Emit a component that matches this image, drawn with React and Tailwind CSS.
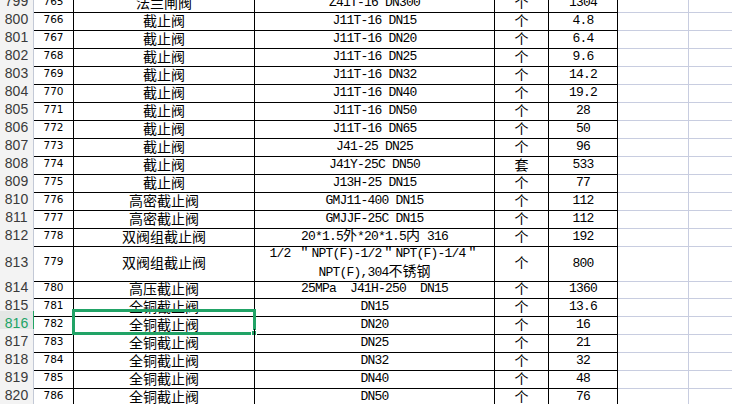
import React from "react";

const rows = [
  { n: 799, id: 765, name: "法兰闸阀", spec: "Z41T-16 DN300", unit: "个", price: "1304" },
  { n: 800, id: 766, name: "截止阀", spec: "J11T-16 DN15", unit: "个", price: "4.8" },
  { n: 801, id: 767, name: "截止阀", spec: "J11T-16 DN20", unit: "个", price: "6.4" },
  { n: 802, id: 768, name: "截止阀", spec: "J11T-16 DN25", unit: "个", price: "9.6" },
  { n: 803, id: 769, name: "截止阀", spec: "J11T-16 DN32", unit: "个", price: "14.2" },
  { n: 804, id: 770, name: "截止阀", spec: "J11T-16 DN40", unit: "个", price: "19.2" },
  { n: 805, id: 771, name: "截止阀", spec: "J11T-16 DN50", unit: "个", price: "28" },
  { n: 806, id: 772, name: "截止阀", spec: "J11T-16 DN65", unit: "个", price: "50" },
  { n: 807, id: 773, name: "截止阀", spec: "J41-25 DN25", unit: "个", price: "96" },
  { n: 808, id: 774, name: "截止阀", spec: "J41Y-25C DN50", unit: "套", price: "533" },
  { n: 809, id: 775, name: "截止阀", spec: "J13H-25 DN15", unit: "个", price: "77" },
  { n: 810, id: 776, name: "高密截止阀", spec: "GMJ11-400 DN15", unit: "个", price: "112" },
  { n: 811, id: 777, name: "高密截止阀", spec: "GMJJF-25C DN15", unit: "个", price: "112" },
  { n: 812, id: 778, name: "双阀组截止阀", spec: "20*1.5外*20*1.5内 316", unit: "个", price: "192" },
  {
    n: 813,
    id: 779,
    name: "双阀组截止阀",
    spec: ["1/2 ″NPT(F)-1/2″NPT(F)-1/4″", "NPT(F),304不锈钢"],
    unit: "个",
    price: "800",
    tall: true,
  },
  { n: 814, id: 780, name: "高压截止阀", spec: "25MPa  J41H-250  DN15", unit: "个", price: "1360" },
  { n: 815, id: 781, name: "全铜截止阀", spec: "DN15", unit: "个", price: "13.6" },
  { n: 816, id: 782, name: "全铜截止阀", spec: "DN20", unit: "个", price: "16", selected: true },
  { n: 817, id: 783, name: "全铜截止阀", spec: "DN25", unit: "个", price: "21" },
  { n: 818, id: 784, name: "全铜截止阀", spec: "DN32", unit: "个", price: "32" },
  { n: 819, id: 785, name: "全铜截止阀", spec: "DN40", unit: "个", price: "48" },
  { n: 820, id: 786, name: "全铜截止阀", spec: "DN50", unit: "个", price: "76" },
  { n: 821, id: 787, name: "全铜截止阀", spec: "DN65", unit: "个", price: "120" },
];

// SimSun-like mix: half-width latin, full-width CJK
function Txt({ s }) {
  const parts = s.match(/[\x00-\xff]+|″|[^\x00-\xff″]+/g) || [];
  return (
    <div className="whitespace-pre leading-[16px]">
      {parts.map((p, i) => {
        if (p === "″")
          return (
            <span key={i} className="inline-block w-[14px] text-center font-['Liberation_Mono',monospace] text-[14px]">
              {p}
            </span>
          );
        return /^[\x00-\xff]/.test(p) ? (
          <span key={i} className="font-['Liberation_Mono',monospace] text-[13px] tracking-[-0.8px]">
            {p}
          </span>
        ) : (
          <span key={i} className="font-['Noto_Sans_CJK_SC',sans-serif] text-[14px]">
            {p}
          </span>
        );
      })}
    </div>
  );
}

const cell = "flex flex-col items-center justify-center border-r border-b border-black text-black pt-[2px]";

function Row({ r }) {
  const height = r.tall ? "h-[34px]" : "h-[18px]";
  return (
    <div className={`grid grid-cols-[34px_40px_181px_240px_54px_69px_71px_71px] ${height}`}>
      <div
        className={`flex items-center justify-center border-r border-b border-b-[#dadada] font-['Liberation_Sans',sans-serif] text-[14px] pt-[2px] ${
          r.selected ? "bg-[#e4e7e5] border-r-[#21a366] text-[#21a366]" : "bg-[#f3f3f3] border-r-[#c3c9d6] text-[#3a3a3a]"
        }`}
      >
        {r.n}
      </div>
      <div className={`${cell} font-['DejaVu_Sans',sans-serif] text-[10.5px]`}>{r.id}</div>
      <div className={`${cell} relative`}>
        <Txt s={r.name} />
        {r.selected && (
          <div className="absolute -left-[2px] -top-[2px] -right-[2px] -bottom-[1px] border-[3px] border-[#21a366]">
            <div className="absolute -right-[4px] -bottom-[4px] w-[6px] h-[6px] bg-[#21a366] border border-white" />
          </div>
        )}
      </div>
      <div className={cell}>
        {Array.isArray(r.spec) ? r.spec.map((line) => <Txt key={line} s={line} />) : <Txt s={r.spec} />}
      </div>
      <div className={cell}>
        <Txt s={r.unit} />
      </div>
      <div className={cell}>
        <Txt s={r.price} />
      </div>
      <div className="border-r border-b border-[#c8cde0]" />
      <div className="border-r border-b border-[#c8cde0]" />
    </div>
  );
}

export default function App() {
  return (
    <div className="w-[732px] h-[404px] overflow-hidden bg-white">
      <div className="-mt-[11px]">
        {rows.map((r) => (
          <Row key={r.n} r={r} />
        ))}
      </div>
    </div>
  );
}
